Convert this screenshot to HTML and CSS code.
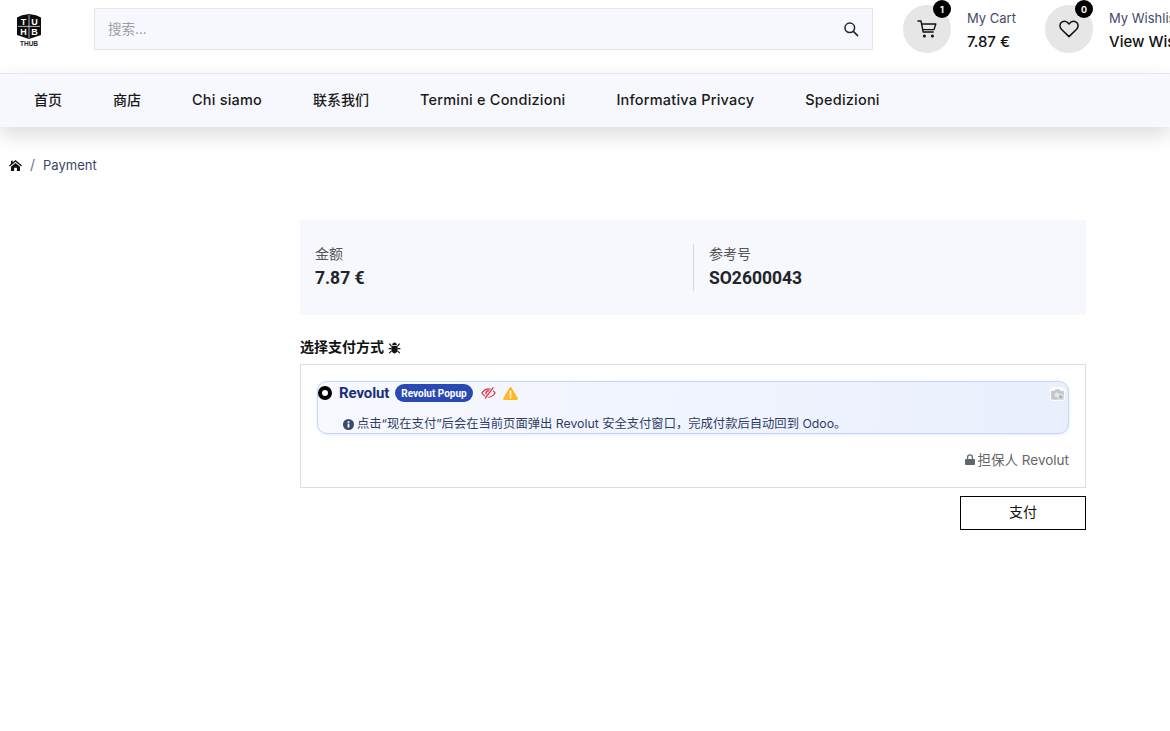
FILE: index.html
```html
<!DOCTYPE html>
<html lang="zh">
<head>
<meta charset="utf-8">
<title>Payment</title>
<link rel="stylesheet" href="styles.css">
</head>
<body>
<header class="top">
  <a class="logo" href="#">
    <svg width="24" height="32" viewBox="0 0 24 32">
      <path d="M5 1.2 L12 0 L19 1.2 L24 3.500 V21 L12 25 L0 21 V3.500 Z" fill="#0c0c0c"/>
      <path d="M12 1 V24 M1 12.400 H23" stroke="#fff" stroke-width=".7"/>
      <text x="6.400" y="10.600" class="logo-letter" text-anchor="middle">T</text>
      <text x="17.600" y="10.600" class="logo-letter" text-anchor="middle">U</text>
      <text x="6.400" y="20.600" class="logo-letter" text-anchor="middle">H</text>
      <text x="17.600" y="20.600" class="logo-letter" text-anchor="middle">B</text>
      <text x="12" y="31.600" class="logo-text" text-anchor="middle">THUB</text>
    </svg>
  </a>
  <form class="search">
    <span class="search-ph">搜索...</span>
    <svg class="search-icon" width="16" height="16" viewBox="0 0 16 16" fill="none" stroke="#222" stroke-width="1.5"><circle cx="6.800" cy="6.800" r="4.800"/><path d="M10.400 10.400 L14.600 14.600" stroke-linecap="round"/></svg>
  </form>
  <div class="action action-cart">
    <div class="bubble">
      <svg width="20" height="20" viewBox="0 0 20 20" fill="none" stroke="#111" stroke-width="1.400" stroke-linecap="round" stroke-linejoin="round"><path d="M1 2h3l2.200 11h10"/><path d="M4.600 5h14.200l-1.800 5.600H5.600"/><circle cx="7.400" cy="17" r=".8" fill="#111"/><circle cx="15.400" cy="17" r=".8" fill="#111"/></svg>
      <span class="count">1</span>
    </div>
    <div class="action-text"><span class="action-label">My Cart</span><strong class="action-value">7.87 €</strong></div>
  </div>
  <div class="action action-wish">
    <div class="bubble">
      <svg width="20" height="18" viewBox="0 0 20 18" fill="none" stroke="#111" stroke-width="1.500" stroke-linejoin="round"><path d="M10 16.600 L2.400 9.200 C0.200 7 0.600 3.600 2.800 2.200 C5 .8 8 1.400 10 4 C12 1.400 15 .8 17.200 2.200 C19.400 3.600 19.800 7 17.600 9.200 Z"/></svg>
      <span class="count">0</span>
    </div>
    <div class="action-text"><span class="action-label">My Wishlist</span><strong class="action-value">View Wishlist</strong></div>
  </div>
</header>
<nav class="menu">
  <a class="zh" href="#">首页</a>
  <a class="zh" href="#">商店</a>
  <a href="#">Chi siamo</a>
  <a class="zh" href="#">联系我们</a>
  <a href="#">Termini e Condizioni</a>
  <a href="#">Informativa Privacy</a>
  <a href="#">Spedizioni</a>
</nav>
<div class="crumbs">
  <svg width="13" height="11" viewBox="0 0 13 11" fill="#111"><path d="M6.500 0 L13 5.400 L12.200 6.400 L6.500 1.700 L.8 6.400 L0 5.400 L2 3.700 V.8 H3.800 V2.200 Z"/><path d="M6.500 2.900 L11 6.700 V10.400 a.6.6 0 0 1-.6.6 H7.900 V7.700 H5.100 V11 H2.600 a.6.6 0 0 1-.6-.6 V6.700 Z"/></svg>
  <span class="crumb-sep">/</span>
  <span class="crumb-current">Payment</span>
</div>
<main class="pay">
  <section class="summary">
    <div class="sum-col sum-left"><span class="sum-label">金额</span><strong class="sum-value">7.87 €</strong></div>
    <div class="sum-col sum-right"><span class="sum-label">参考号</span><strong class="sum-value">SO2600043</strong></div>
  </section>
  <h2 class="choose">选择支付方式
    <svg width="13" height="13" viewBox="0 0 13 13" fill="#111"><path d="M3.400 5 H9.600 V8.500 C9.600 10.800 8 12.400 6.500 12.400 C5 12.400 3.400 10.800 3.400 8.500 Z"/><path d="M4.200 4.200 C4.200 2.800 5.200 1.600 6.500 1.600 C7.800 1.600 8.800 2.800 8.800 4.200 Z"/><path d="M1.400 2.600 L3.400 5.200 M11.600 2.600 L9.600 5.200 M.6 7.600 H3.400 M12.400 7.600 H9.600 M1.200 12.200 L3.600 9.800 M11.800 12.200 L9.400 9.800" stroke="#111" stroke-width="1.100" fill="none"/></svg>
  </h2>
  <section class="methods">
    <div class="method">
      <div class="method-row">
        <span class="radio"></span>
        <span class="method-name">Revolut</span>
        <span class="pill">Revolut Popup</span>
        <svg class="eye" width="15" height="12" viewBox="0 0 15 12" fill="none" stroke="#dc3545" stroke-width="1.300"><path d="M.9 6 C3 3 5.200 1.800 7.500 1.800 C9.800 1.800 12 3 14.100 6 C12 9 9.800 10.200 7.500 10.200 C5.200 10.200 3 9 .9 6 Z"/><path d="M5.600 7.400 A2.200 2.200 0 0 1 8.800 4.400" stroke-width="1.400"/><path d="M13 0 L4.400 11.600" stroke="#f5f7fe" stroke-width="3"/><path d="M12.400 .4 L4 11.600" stroke-width="1.300"/></svg>
        <svg class="warn" width="15" height="13" viewBox="0 0 15 13"><path d="M7.500 0 C7 0 6.700.3 6.500.6 L.2 11.300 C-.2 12 .3 13 1.200 13 H13.800 C14.700 13 15.200 12 14.800 11.300 L8.500.6 C8.300.3 8 0 7.500 0 Z" fill="#fdb92c"/><rect x="6.700" y="4" width="1.600" height="4.600" fill="#fff"/><rect x="6.700" y="9.600" width="1.600" height="1.600" fill="#fff"/></svg>
      </div>
      <p class="method-note">
        <svg width="11" height="11" viewBox="0 0 11 11"><circle cx="5.500" cy="5.500" r="5.500" fill="#3a4a6b"/><rect x="4.600" y="4.600" width="1.800" height="4" fill="#fff"/><rect x="4.600" y="2.200" width="1.800" height="1.600" fill="#fff"/></svg>
        点击“现在支付”后会在当前页面弹出 Revolut 安全支付窗口，完成付款后自动回到 Odoo。
      </p>
      <span class="cam">
        <svg width="13" height="11" viewBox="0 0 14 12"><path d="M1.200 2h2.800l.9-1.600h4.200L10 2h2.800a1.200 1.200 0 0 1 1.200 1.200v7.200a1.200 1.200 0 0 1-1.200 1.200H1.200A1.200 1.200 0 0 1 0 10.400V3.200A1.200 1.200 0 0 1 1.200 2z" fill="#c3c6cb"/><circle cx="6.500" cy="6.500" r="2.600" fill="#e4e6ea"/><circle cx="10.600" cy="8.600" r="2.800" fill="#b3b6bb" stroke="#f8f9fb" stroke-width=".9"/></svg>
      </span>
    </div>
    <div class="secured">
      <svg width="10" height="11" viewBox="0 0 10 11" fill="#5f6670"><path d="M1 5h8a1 1 0 0 1 1 1v4a1 1 0 0 1-1 1H1a1 1 0 0 1-1-1V6a1 1 0 0 1 1-1z"/><path d="M2.600 5V3.200a2.400 2.400 0 0 1 4.800 0V5" fill="none" stroke="#5f6670" stroke-width="1.300"/></svg>
      担保人 Revolut
    </div>
  </section>
  <div class="pay-actions"><button class="pay-btn" type="button">支付</button></div>
</main>
</body>
</html>
```
FILE: styles.css
```css
* { box-sizing: border-box; }
html, body { margin: 0; height: 100%; overflow: hidden; background: #fff; }
body { font-family: Inter, "Noto Sans CJK SC", sans-serif; color: #111; font-size: 14px; }
.top { display: flex; align-items: flex-start; height: 73px; padding: 5px 0 0 17px; white-space: nowrap; }
.logo { width: 77px; height: 40px; flex: none; padding-top: 9px; display: block; }
.logo svg { display: block; }
.logo-letter { font: 700 9px "Liberation Sans", sans-serif; fill: #fff; }
.logo-text { font: 700 6.500px "Liberation Sans", sans-serif; fill: #222; }
.search { flex: none; margin-top: 3px; width: 779px; height: 42px; background: #f7f8fd; border: 1px solid #e4e6ee; display: flex; align-items: center; justify-content: space-between; padding: 0 13px; }
.search-ph { color: #9aa0a8; font-size: 13.500px; position: relative; top: -1px; }
.action { display: flex; flex: none; align-items: center; gap: 16px; height: 48px; margin-top: 0; }
.action-cart { margin-left: 30px; width: 142px; }
.bubble { position: relative; width: 48px; height: 48px; border-radius: 50%; background: #e6e6e6; display: flex; align-items: center; justify-content: center; flex: none; }
.count { position: absolute; top: -5px; right: 0; width: 18px; height: 18px; border-radius: 50%; background: #000; color: #fff; font-size: 9px; font-weight: 700; display: flex; align-items: center; justify-content: center; }
.action-text { display: flex; flex-direction: column; gap: 5px; padding-top: 2px; }
.action-label { color: #3f4a6b; font-size: 13px; line-height: 18px; }
.action-value { font-size: 15px; line-height: 19px; font-weight: 500; color: #111; }
.menu { display: flex; height: 54px; align-items: center; gap: 51px; padding: 0 0 3px 34px; background: #f7f8fd; border-top: 1px solid #e6e7ec; box-shadow: 0 8px 20px rgba(0,0,0,.14); }
.menu a { color: #1a1a1a; text-decoration: none; font-size: 14.500px; letter-spacing: .2px; font-weight: 500; white-space: nowrap; }
.menu a.zh { font-size: 14px; letter-spacing: 0; }
.crumbs { display: flex; align-items: center; gap: 8px; padding: 29px 0 0 9px; height: 47px; line-height: 18px; }
.crumb-sep { color: #6c7280; }
.crumb-current { color: #3a4668; font-size: 13px; }
.pay { width: 786px; margin: 46px 0 0 300px; }
.summary { display: flex; height: 95px; background: #f7f8fd; padding: 24px 0 24px 15px; }
.sum-col { display: flex; flex-direction: column; gap: 3px; }
.sum-left { width: 378px; }
.sum-right { border-left: 1px solid #d6d7db; padding-left: 15px; }
.sum-label { color: #555; font-size: 14px; line-height: 20px; }
.sum-value { font-family: Roboto, sans-serif; font-size: 17.500px; font-weight: 700; color: #212529; line-height: 23px; }
.choose { margin: 23px 0 0; font-size: 14px; font-weight: 700; line-height: 18px; display: flex; align-items: center; gap: 4px; color: #111; }
.methods { height: 124px; margin-top: 8px; border: 1px solid #dedede; padding: 16px 16px 0; }
.method { position: relative; height: 53px; border: 1px solid #c5d3fa; border-radius: 10px; background: linear-gradient(100deg, #f7f9ff, #e9effd); box-shadow: 0 1px 3px rgba(60,90,180,.12); padding-top: 1px; }
.method-row { display: flex; align-items: center; height: 20px; }
.radio { width: 14px; height: 14px; border-radius: 50%; border: 4px solid #000; background: #fff; flex: none; }
.method-name { margin-left: 7px; font-family: Roboto, sans-serif; font-size: 15px; font-weight: 700; color: #1a2f7a; letter-spacing: -.1px; }
.pill { margin-left: 6px; height: 18px; padding: 0 6px; border-radius: 9px; background: #2b49b3; color: #fff; font-family: Roboto, sans-serif; font-size: 10px; font-weight: 700; display: flex; align-items: center; }
.eye { margin-left: 8px; }
.warn { margin-left: 7px; }
.method-note { margin: 12px 0 0 25px; font-size: 12.300px; line-height: 18px; color: #2f3c62; display: flex; align-items: center; gap: 3px; white-space: nowrap; }
.cam { position: absolute; top: 4px; right: 2px; width: 17px; height: 16px; border-radius: 4px; background: #fbfcfe; border: 1px solid #edeff4; display: flex; align-items: center; justify-content: center; }
.secured { display: flex; align-items: center; justify-content: flex-end; gap: 3px; height: 18px; margin-top: 16px; color: #666; font-size: 13.500px; }
.pay-actions { display: flex; justify-content: flex-end; margin-top: 8px; }
.pay-btn { width: 126px; height: 34px; padding: 0 0 5px; background: #fff; border: 1px solid #000; color: #111; font: 14px Inter, "Noto Sans CJK SC", sans-serif; }
```
